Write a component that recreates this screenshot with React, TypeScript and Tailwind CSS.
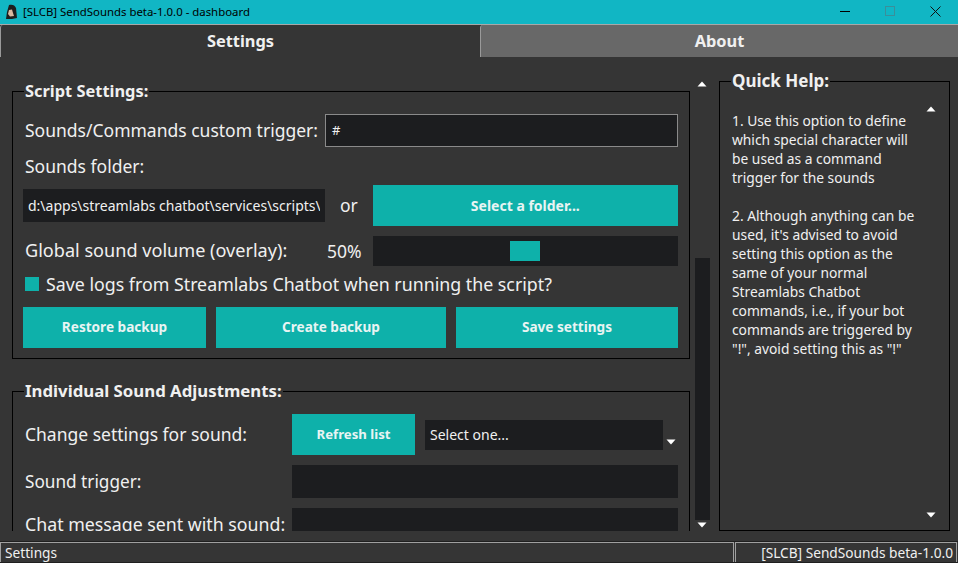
import React from 'react';

const font = "font-['Noto_Sans','Open_Sans',sans-serif]";

const Up = ({ className = '' }: { className?: string }) => (
  <svg width="10" height="6" viewBox="0 0 10 6" className={className}><path d="M5 0.5 L9.5 5.5 H0.5 Z" fill="#fff" /></svg>
);
const Down = ({ className = '' }: { className?: string }) => (
  <svg width="10" height="6" viewBox="0 0 10 6" className={className}><path d="M0.5 0.5 H9.5 L5 5.5 Z" fill="#fff" /></svg>
);

const Btn = ({ className = '', children }: { className?: string; children: React.ReactNode }) => (
  <div className={`flex items-center justify-center bg-[#0eb1aa] font-bold text-[#e8f4f3] ${className}`}>{children}</div>
);

export default function App() {
  return (
    <div className={`${font} flex h-[563px] w-[958px] flex-col overflow-hidden bg-[#353535] text-[#f0f0f0]`}>
      {/* title bar */}
      <div className="flex h-6 shrink-0 items-center bg-[#11b6c4] text-black">
        <svg width="14" height="16" viewBox="0 0 14 16" className="ml-[4px]">
          <path d="M5 1 C8 0 11 1 12 4 L13 14 L8 15 L2 15 L3 8 Z" fill="#1d1d1d" />
          <path d="M5 6 L8 5.5 L9 9 L10 12 L6 12.5 L4 10 Z" fill="#d9b8a0" />
        </svg>
        <span className="ml-[5px] text-[11.4px]">[SLCB] SendSounds beta-1.0.0 - dashboard</span>
        <div className="mb-[2px] ml-auto flex items-center">
          <div className="h-px w-[10px] bg-black" />
          <div className="ml-[35px] h-[10px] w-[10px] border border-[#3a8f9a]" />
          <svg width="11" height="11" viewBox="0 0 11 11" className="ml-[35px] mr-[17px]">
            <path d="M0.5 0.5 L10.5 10.5 M10.5 0.5 L0.5 10.5" stroke="#111" strokeWidth="1" />
          </svg>
        </div>
      </div>

      {/* tabs */}
      <div className="flex h-[33px] shrink-0 border-t border-[#a8a8a8] text-[16.4px] font-bold leading-[31px]">
        <div className="w-[480px] rounded-tl-[3px] border-l border-[#9a9a9a] bg-[#353535] text-center">Settings</div>
        <div className="flex-1 rounded-tl-[3px] border-l border-[#9a9a9a] bg-[#686868] text-center">About</div>
      </div>

      {/* body */}
      <div className="flex h-[474px] shrink-0 overflow-hidden">
        <div className="w-[690px] shrink-0 overflow-hidden pl-3 pt-[23px] text-[17.5px]">
          <fieldset className="h-[279px] w-[678px] border border-black pl-3">
            <legend className="-ml-[1px] px-[1px] text-[16.4px] font-bold leading-[22px]">Script Settings:</legend>
            <div className="mt-[12px] flex h-[33px] items-center">
              <span className="w-[300px] whitespace-nowrap">Sounds/Commands custom trigger:</span>
              <div className="flex h-[33px] w-[353px] items-center border border-[#8a8a8a] bg-[#1c1d1f] pl-[6px] text-[13px]">#</div>
            </div>
            <div className="mt-[3px] leading-[33px]">Sounds folder:</div>
            <div className="-ml-[2px] mt-[2px] flex h-[41px] items-center">
              <div className="flex h-[33px] w-[302px] items-center overflow-hidden whitespace-nowrap bg-[#1c1d1f] pl-[5px] text-[14px]">
                <span className="w-[292px] overflow-hidden">d:\apps\streamlabs chatbot\services\scripts\</span>
              </div>
              <span className="ml-[15px]">or</span>
              <Btn className="ml-[15px] h-[41px] w-[305px] text-[14px]">Select a folder...</Btn>
            </div>
            <div className="mt-[10px] flex h-[30px] items-center">
              <span className="w-[302px] whitespace-nowrap text-[18.1px]">Global sound volume (overlay):</span>
              <span className="w-[46px]">50%</span>
              <div className="flex h-[30px] w-[305px] items-center justify-center bg-[#1c1d1f]">
                <div className="mr-[2px] h-5 w-[30px] bg-[#0eb1aa]" />
              </div>
            </div>
            <div className="mt-[4px] flex h-[28px] items-center">
              <div className="h-[14px] w-[14px] bg-[#0eb1aa]" />
              <span className="ml-[7px] whitespace-nowrap text-[17.8px]">Save logs from Streamlabs Chatbot when running the script?</span>
            </div>
            <div className="-ml-[2px] mt-[9px] flex gap-[10px] text-[13.6px]">
              <Btn className="h-[41px] w-[183px]">Restore backup</Btn>
              <Btn className="h-[41px] w-[230px]">Create backup</Btn>
              <Btn className="h-[41px] w-[222px]">Save settings</Btn>
            </div>
          </fieldset>

          <fieldset className="mt-[21px] h-[200px] w-[678px] border border-b-0 border-black pl-3">
            <legend className="-ml-[1px] px-[1px] text-[16.8px] font-bold leading-[22px]">Individual Sound Adjustments:</legend>
            <div className="mt-[12px] flex h-[41px] items-center">
              <span className="w-[267px] whitespace-nowrap">Change settings for sound:</span>
              <Btn className="h-[41px] w-[123px] text-[13.2px]">Refresh list</Btn>
              <div className="ml-[10px] flex h-[30px] w-[238px] items-center bg-[#1c1d1f] pl-[5px] text-[14px]">Select one...</div>
              <Down className="ml-[3px] mt-[14px]" />
            </div>
            <div className="mt-[10px] flex h-[33px] items-center">
              <span className="w-[267px] whitespace-nowrap text-[17.2px]">Sound trigger:</span>
              <div className="h-[33px] w-[386px] bg-[#1c1d1f]" />
            </div>
            <div className="mt-[10px] flex h-[33px] items-center">
              <span className="w-[267px] whitespace-nowrap text-[17.75px]">Chat message sent with sound:</span>
              <div className="h-[33px] w-[386px] bg-[#1c1d1f]" />
            </div>
          </fieldset>
        </div>

        {/* scrollbar */}
        <div className="flex w-[29px] shrink-0 flex-col items-center pl-[5px] pr-[10px] pt-[24px]">
          <Up />
          <div className="mt-[171px] h-[262px] w-[15px] bg-[#1c1d1f]" />
          <Down className="mt-[2px]" />
        </div>

        {/* quick help */}
        <div className="w-[231px] shrink-0 pt-[13px]">
          <fieldset className="relative h-[461px] border border-black pl-[12px] pr-[24px]">
            <legend className="-ml-[1px] px-[1px] text-[17px] font-bold leading-[22px]">Quick Help:</legend>
            <div className="pt-[19px] text-[13.8px] leading-[19px]">
              <p>1. Use this option to define which special character will be used as a command trigger for the sounds</p>
              <p className="mt-[19px]">2. Although anything can be used, it's advised to avoid setting this option as the same of your normal Streamlabs Chatbot commands, i.e., if your bot commands are triggered by "!", avoid setting this as "!"</p>
            </div>
            <Up className="absolute right-[13px] top-[14px]" />
            <Down className="absolute bottom-[12px] right-[13px]" />
          </fieldset>
        </div>
      </div>

      {/* status bar */}
      <div className="mt-auto flex h-[22px] shrink-0 border-b border-t border-[#1f1f1f] pr-px text-[13.7px] leading-[19px]">
        <div className="flex-1 border-l border-r border-t border-[#a0a0a0] pl-[4px]">Settings</div>
        <div className="ml-[1px] w-[222px] border-l border-r border-t border-[#a0a0a0] pr-[3px] text-right">[SLCB] SendSounds beta-1.0.0</div>
      </div>
    </div>
  );
}
